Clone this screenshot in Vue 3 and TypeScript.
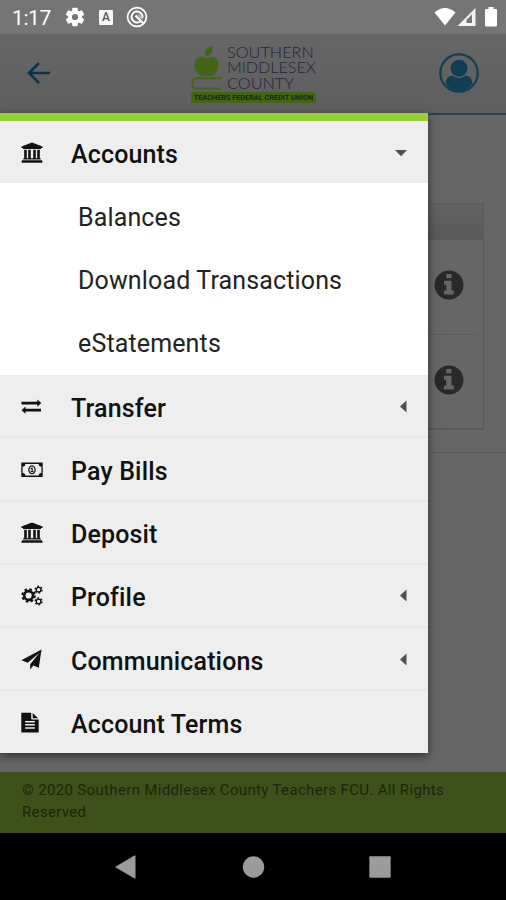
<script setup lang="ts">
import { ref } from 'vue'

interface MenuItem {
  label: string
  icon: 'bank' | 'transfer' | 'money' | 'gears' | 'plane' | 'document'
  expandable?: boolean
  children?: string[]
}

const items: MenuItem[] = [
  { label: 'Accounts', icon: 'bank', expandable: true, children: ['Balances', 'Download Transactions', 'eStatements'] },
  { label: 'Transfer', icon: 'transfer', expandable: true },
  { label: 'Pay Bills', icon: 'money' },
  { label: 'Deposit', icon: 'bank' },
  { label: 'Profile', icon: 'gears', expandable: true },
  { label: 'Communications', icon: 'plane', expandable: true },
  { label: 'Account Terms', icon: 'document' },
]
const open = ref('Accounts')
const toggle = (item: MenuItem) => {
  if (item.children) open.value = open.value === item.label ? '' : item.label
}
</script>

<template>
  <div class="screen">
    <div class="status">
      <span class="clock">1:17</span>
      <svg class="gear" viewBox="0 0 20 20"><g fill="#fff"><circle cx="10" cy="10" r="7" /><rect v-for="a in [0, 60, 120]" :key="a" x="7.2" y="0.7" width="5.6" height="18.6" rx="1" :transform="`rotate(${a} 10 10)`" /></g><circle cx="10" cy="10" r="3.1" fill="#757575" /></svg>
      <span class="badge">A</span>
      <svg class="blocked" viewBox="0 0 22 22" fill="none" stroke="#fff"><circle cx="11" cy="11" r="9.4" stroke-width="1.7" /><path d="M14.800 15A5.500 5.500 0 1 1 16.500 11.500" stroke-width="2" /><path d="M9.500 9.500l7.500 7.500" stroke-width="2.200" /><path d="M12 8.500l4.500 4.500" stroke-width="1" /></svg>
      <div class="signals">
        <svg width="22" height="20" viewBox="0 0 22 20"><path d="M.5 5.5Q11-3.5 21.500 5.500L11 18.500z" fill="#fff" /></svg>
        <svg width="19" height="20" viewBox="0 0 19 20"><path d="M18.500 1v18H.5z" fill="#f2f2f2" /><path d="M15 7.200v8.800H9.500V13z" fill="#757575" /></svg>
        <svg class="battery" width="12" height="20" viewBox="0 0 12 20"><path d="M3.500 0h5v2H11q1 0 1 1v15.500q0 1-1 1H1q-1 0-1-1V3q0-1 1-1h2.500z" fill="#fff" /></svg>
      </div>
    </div>

    <header class="header">
      <svg class="back" viewBox="0 0 24 24" fill="none" stroke="#0a344c" stroke-width="2.5"><path d="M23 12H2M12 2L2 12l10 10" /></svg>
      <div class="logo">
        <div class="logo-top">
          <svg class="apple" viewBox="0 0 31 44">
            <g fill="#426614"><path d="M14.500 10.500C13 5.500 16 1 21.300 .3C22.500 4.500 20.500 9.500 14.500 10.500z" /><path d="M15.500 12.500C8 8.500 3 13 3.500 19.500C4 25.500 8 30 12 30h7C24 30 27 25.500 27.500 19.500C28 13 23 8.500 15.500 12.500z" /></g>
            <path d="M30 32.200H5C0 32.200 0 42.500 5 42.500h25" fill="none" stroke="#426614" stroke-width="1.900" />
          </svg>
          <div class="names"><span>SOUTHERN</span><span class="mid">MIDDLESEX</span><span>COUNTY</span></div>
        </div>
        <div class="tagline">TEACHERS FEDERAL CREDIT UNION</div>
      </div>
      <svg class="user" viewBox="0 0 40 40"><circle cx="20" cy="20" r="18.700" fill="none" stroke="#123e54" stroke-width="2.200" /><circle cx="20" cy="15.300" r="8.500" fill="#123e54" /><path d="M6.500 30.500Q7 23 13.500 22.700Q20 27.500 26.500 22.700Q33 23 33.500 30.500Q28 38 20 38Q12 38 6.500 30.500z" fill="#123e54" /></svg>
    </header>

    <main class="content">
      <section class="card">
        <div class="card-head"></div>
        <div v-for="n in 2" :key="n" class="account">
          <svg viewBox="0 0 30 30"><circle cx="15" cy="15" r="14.500" fill="#292929" /><path d="M12.300 4h5.200v4.200h-5.200zM10 10.800h7.500v9.700h2.300v4H10v-4h2.300v-5.700H10z" fill="#666" /></svg>
        </div>
      </section>
      <div class="divider"></div>
    </main>

    <footer class="footer">© 2020 Southern Middlesex County Teachers FCU. All Rights Reserved</footer>
    <div class="softkeys">
      <svg viewBox="0 0 24 24"><path d="M0 12L19.500 .6q1-.3 1 .7v21.400q0 1-1 .7z" /></svg>
      <svg viewBox="0 0 24 24"><circle cx="12.500" cy="12" r="10.700" /></svg>
      <svg viewBox="0 0 24 24"><rect x="1.300" y="1.300" width="21.400" height="21.400" rx="1" /></svg>
    </div>

    <nav class="menu">
      <template v-for="item in items" :key="item.label">
        <div class="item" @click="toggle(item)">
          <svg class="icon" viewBox="0 0 22 22" fill="#111">
            <path v-if="item.icon === 'bank'" d="M11 .5L21.500 4.500v1.600H20v.8H2v-.8H.5V4.500zM3.200 7.800h2.600v8.500h1.400V7.800h2.600v8.500h2.400V7.800h2.600v8.500h1.400V7.800h2.600v8.500h.9v1.200H2.200v-1.200h1zM1 18.300h20v.9h.5v1.500H.5v-1.500H1z" />
            <path v-else-if="item.icon === 'transfer'" d="M.5 5.700h15.800V3.500l4 3.600-4 3.600V8.400H.5zM20 12.800H4.500v-2.200l-4 3.600 4 3.600v-2.300H20z" />
            <template v-else-if="item.icon === 'money'">
              <path fill-rule="evenodd" d="M.3 3.500h21.400v14.600H.3zM4.300 4.900q0 2.500-2.700 2.700v6.300q2.700.2 2.700 2.700h13.400q0-2.500 2.700-2.700V7.600q-2.700-.2-2.700-2.700z" />
              <ellipse cx="11" cy="10.800" rx="3.100" ry="3.900" fill="none" stroke="#111" stroke-width="1.300" />
              <path d="M10.700 8.500h1v3.600h.8v.9H9.700v-.9h.9V9.900l-.8.400-.4-.7z" />
            </template>
            <g v-else-if="item.icon === 'gears'" fill="none" stroke="#111">
              <circle cx="7.600" cy="10.500" r="4.400" stroke-width="2.600" />
              <circle cx="7.600" cy="10.500" r="6.300" stroke-width="1.900" stroke-dasharray="2.650 2.298" />
              <circle cx="17.600" cy="4.700" r="2.300" stroke-width="1.300" />
              <circle cx="17.600" cy="4.700" r="3.400" stroke-width="1.400" stroke-dasharray="1.780 1.780" />
              <circle cx="17.600" cy="16.400" r="2.300" stroke-width="1.300" />
              <circle cx="17.600" cy="16.400" r="3.400" stroke-width="1.400" stroke-dasharray="1.780 1.780" />
            </g>
            <path v-else-if="item.icon === 'plane'" d="M20.500 .5L17.800 18.700l-5.400-2.200-3.200 3.900V15.300L18.300 3.900 6.700 13.800.4 11.300z" />
            <path v-else fill-rule="evenodd" d="M.3 .8h9.900v5.500q0 1.300 1.300 1.300h6.200v12.900H.3zM11.700 .9l5.500 5.300h-5.500zM4.200 9.100v1.400h9.600V9.100zM4.200 12.100v1.400h9.600v-1.400zM4.200 15.300v1.400h9.600v-1.400z" />
          </svg>
          <span class="label">{{ item.label }}</span>
          <svg v-if="item.expandable" class="caret" viewBox="0 0 14 14" fill="#505050"><path v-if="open === item.label" d="M1 4h12L7 10.300z" /><path v-else d="M12.500 .5v12L6 6.500z" /></svg>
        </div>
        <div v-if="item.children && open === item.label" class="children">
          <div v-for="child in item.children" :key="child" class="child">{{ child }}</div>
        </div>
      </template>
    </nav>
  </div>
</template>

<style>
body { margin: 0; background: #000; }
</style>

<style scoped>
.screen { position: relative; display: flex; flex-direction: column; width: 506px; height: 900px; overflow: hidden; background: #666; font-family: Roboto, "Liberation Sans", sans-serif; }
.screen * { box-sizing: border-box; }
.status { display: flex; align-items: center; height: 34px; padding: 0 9px 0 12px; background: #757575; color: #fff; flex: none; }
.clock { width: 53px; font-size: 21px; letter-spacing: -.4px; line-height: 36px; padding-top: 2px; }
.gear { width: 20px; height: 20px; }
.badge { width: 14px; height: 15px; margin-left: 14px; border-radius: 1px; background: #f5f5f5; color: #555; font-size: 12px; font-weight: 500; line-height: 15px; text-align: center; }
.blocked { width: 22px; height: 22px; margin-left: 13px; }
.signals { display: flex; margin-left: auto; align-items: center; }
.battery { margin-left: 9px; }
.signals svg:nth-child(2) { margin-left: 1px; }
.header { display: flex; align-items: center; justify-content: space-between; height: 81px; padding: 0 27px 1px; border-bottom: 2px solid #20465a; background: linear-gradient(#666, #5e5e5e); flex: none; }
.back { width: 24px; height: 24px; }
.logo { width: 125px; height: 57px; margin: 2px 0 0 17px; }
.logo-top { display: flex; height: 46px; gap: 5px; }
.apple { width: 31px; height: 44px; }
.names { display: flex; flex-direction: column; color: #24223d; font-family: Lato, sans-serif; font-size: 16.300px; font-weight: 300; line-height: 15.600px; white-space: nowrap; margin-top: -2px; }
.names .mid { letter-spacing: -.1px; }
.tagline { height: 11px; border-radius: 2px; background: #426614; color: #15272b; font-size: 7.300px; font-weight: 700; line-height: 11px; text-align: center; white-space: nowrap; }
.user { width: 40px; height: 40px; }
.content { flex: 1; padding-top: 88px; }
.card { width: 462px; margin-left: 22px; border: 1px solid #5a5a5a; border-bottom-width: 2px; }
.card-head { height: 36px; border-bottom: 1px solid #5b5b5b; background: linear-gradient(#636363, #5a5a5a); }
.account { display: flex; align-items: center; justify-content: flex-end; height: 94px; margin: 0 5px; padding: 0 14.500px 5px; }
.account + .account { border-top: 1px solid #5d5d5d; padding-bottom: 4px; }
.account svg { width: 30px; height: 30px; }
.divider { height: 1px; margin: 22px 0 0 22px; background: #5b5b5b; }
.footer { height: 61px; padding: 7px 22px 0; background: #3f511a; color: #1c260c; font-size: 15px; letter-spacing: .34px; line-height: 22px; flex: none; }
.softkeys { display: flex; align-items: center; justify-content: center; gap: 102.500px; height: 67px; background: #000; flex: none; }
.softkeys svg { width: 24px; height: 24px; fill: #9b9b9b; }
.menu { position: absolute; top: 113px; left: 0; width: 428px; height: 640px; border-top: 8px solid #99ce37; background: #eee; box-shadow: 0 3px 9px rgba(0, 0, 0, .55); }
.item { display: flex; align-items: center; height: 63.250px; padding: 2px 20px 0 21px; border-bottom: 2px solid #e7e7e7; }
.item:first-child { height: 62px; padding-top: 3px; border-bottom-color: #eee; }
.item:last-child { height: 61.750px; border-bottom: 0; }
.icon { width: 22px; height: 22px; margin-right: 28px; }
.label { color: #111; font-size: 25px; font-weight: 500; letter-spacing: .15px; line-height: 28px; padding-top: 4px; }
.caret { width: 14px; height: 14px; margin-left: auto; }
.children { background: #fff; }
.child { height: 64px; padding: 0 0 0 78px; color: #222; font-size: 25px; letter-spacing: .14px; line-height: 69px; }
.child + .child { line-height: 68px; }
.child:last-child { line-height: 66px; }
</style>
